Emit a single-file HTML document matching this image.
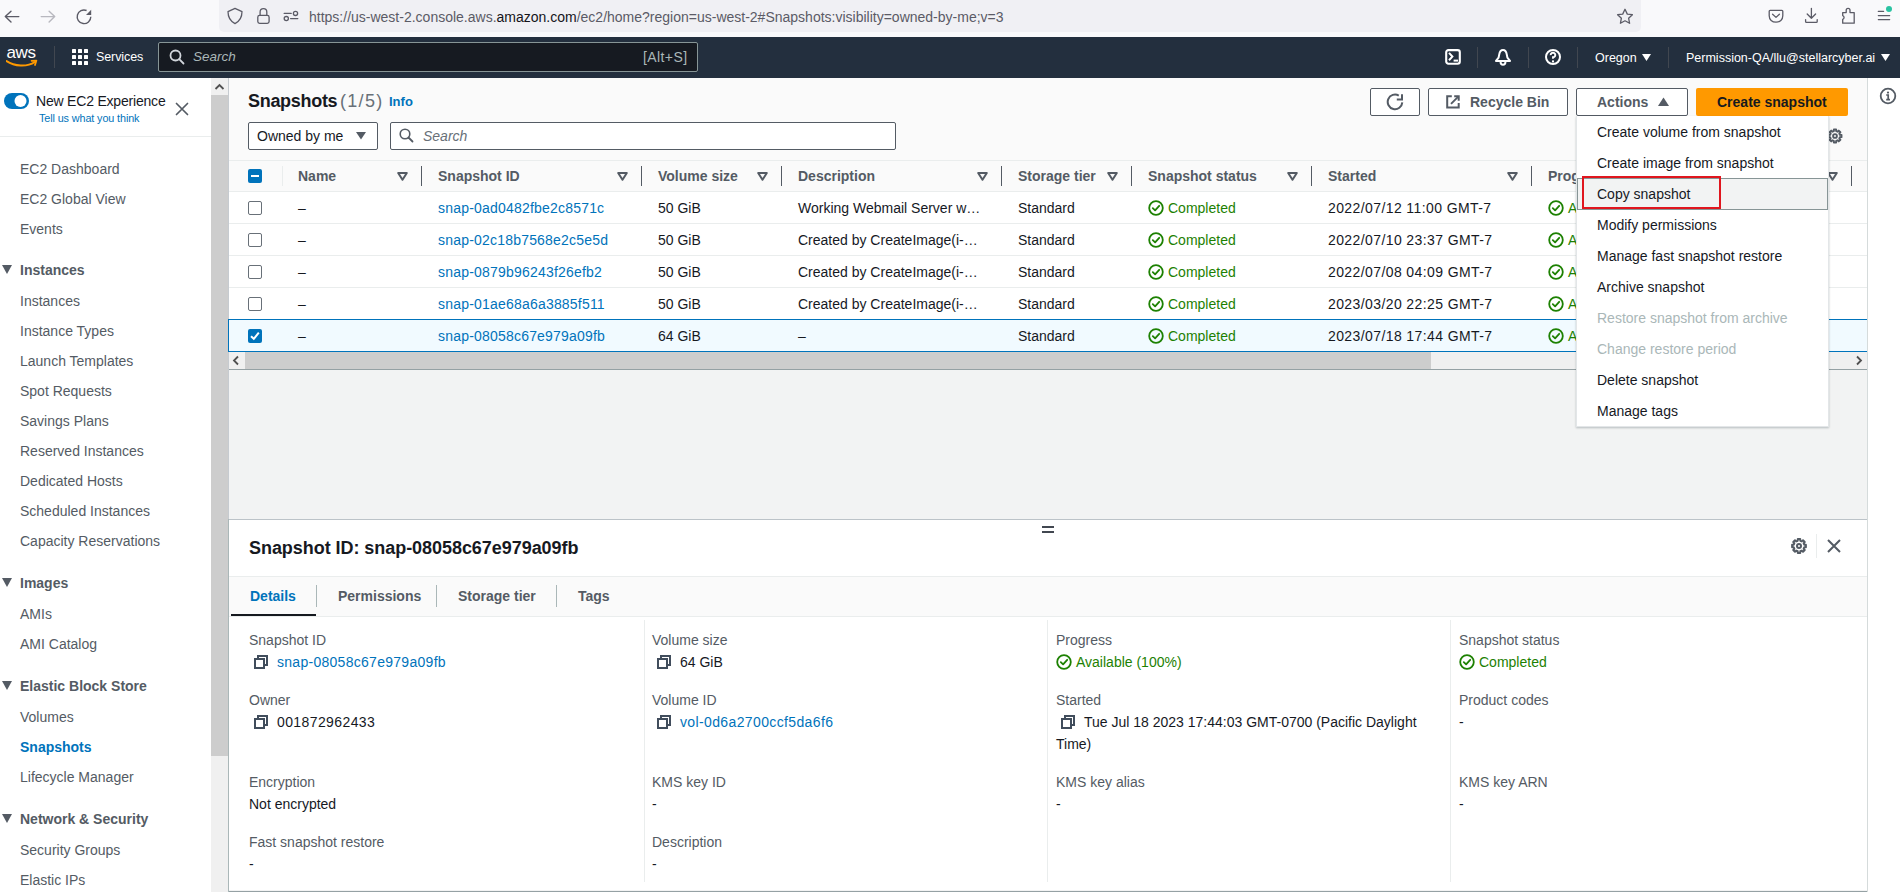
<!DOCTYPE html>
<html><head><meta charset="utf-8">
<style>
*{box-sizing:border-box;margin:0;padding:0}
html,body{width:1900px;height:892px;overflow:hidden;background:#fff;font-family:"Liberation Sans",sans-serif;font-size:14px;color:#16191f}
.a{position:absolute;white-space:nowrap}
#chrome{position:absolute;left:0;top:0;width:1900px;height:37px;background:#f9f9fb}
#url{position:absolute;left:219px;top:-4px;width:1422px;height:36px;background:#f0f0f4;border-radius:5px}
#nav{position:absolute;left:0;top:37px;width:1900px;height:41px;background:#232f3e}
#side{position:absolute;left:0;top:78px;width:211px;height:814px;background:#fff}
#sb{position:absolute;left:211px;top:78px;width:17px;height:814px;background:#f0f0f0}
#main{position:absolute;left:228px;top:78px;width:1640px;height:814px;background:#f2f3f3;border-left:1px solid #c6cbd0;border-right:1px solid #d5dbdb}
#tools{position:absolute;left:1868px;top:78px;width:32px;height:814px;background:#fff}
.nl{font-size:14px;color:#545b64;left:20px;line-height:20px}
.sh{font-size:14px;font-weight:bold;color:#545b64;left:20px;line-height:20px}
.tri{position:absolute;left:2px;width:0;height:0;border-left:5px solid transparent;border-right:5px solid transparent;border-top:9px solid #545b64}
.th{font-weight:bold;color:#545b64;line-height:20px;top:166px}
.sep{position:absolute;top:166px;width:1px;height:20px;background:#545b64}
.sort{position:absolute;top:172px}
.td{line-height:20px}
.lnk{color:#0073bb}
.ok{color:#1d8102}
.rl{position:absolute;left:229px;width:1638px;height:1px;background:#eaeded}
.cb{position:absolute;left:248px;width:14px;height:14px;border:1px solid #687078;border-radius:2px;background:#fff}
.mi{left:1597px;line-height:20px;color:#16191f}
.dis{color:#aab7b8}
.lbl{color:#545b64;line-height:20px}
.val{line-height:20px}
</style></head><body>
<div id="chrome"><div id="url"></div>
<svg class="a" style="left:0;top:0" width="110" height="34" viewBox="0 0 110 34">
<path d="M11 11.3L5.3 16.6L11 22M5.5 16.6H18.8" fill="none" stroke="#5b5b66" stroke-width="1.4" stroke-linecap="round" stroke-linejoin="round"/>
<path d="M49.1 11.3L54.7 16.6L49.1 22M54.5 16.6H41.2" fill="none" stroke="#b8b8bf" stroke-width="1.4" stroke-linecap="round" stroke-linejoin="round"/>
<path d="M90.8 16.8A6.8 6.8 0 1 1 86.6 10.5" fill="none" stroke="#5b5b66" stroke-width="1.4"/>
<path d="M91.2 9.8V15H86Z" fill="#5b5b66"/>
</svg>
<svg class="a" style="left:215px;top:0" width="110" height="34" viewBox="0 0 110 34">
<path d="M20 8.4L27 11.6C27 17.5 25.5 21 20 23.6C14.5 21 13 17.5 13 11.6Z" fill="none" stroke="#5b5b66" stroke-width="1.3" stroke-linejoin="round"/>
<rect x="42.8" y="15.4" width="11.3" height="8" rx="1.8" fill="none" stroke="#5b5b66" stroke-width="1.3"/>
<path d="M45.1 15.4V12A3.35 3.35 0 0 1 51.8 12V15.4" fill="none" stroke="#5b5b66" stroke-width="1.3"/>
<path d="M69.2 13.4H76.2M75.6 18.6H82.8" stroke="#5b5b66" stroke-width="1.3" stroke-linecap="round"/>
<circle cx="80.5" cy="13.4" r="2.1" fill="none" stroke="#5b5b66" stroke-width="1.3"/>
<circle cx="71.3" cy="18.6" r="2.1" fill="none" stroke="#5b5b66" stroke-width="1.3"/>
</svg>
<div class="a" style="left:309px;top:7px;line-height:20px;font-size:14px;color:#5b5b66">https://us-west-2.console.aws.<span style="color:#15141a">amazon.com</span>/ec2/home?region=us-west-2#Snapshots:visibility=owned-by-me;v=3</div>
<svg class="a" style="left:1616px;top:8px" width="18" height="17" viewBox="0 0 18 17"><path d="M9 1.3L11.3 6.1L16.4 6.7L12.6 10.2L13.6 15.3L9 12.8L4.4 15.3L5.4 10.2L1.6 6.7L6.7 6.1Z" fill="none" stroke="#5b5b66" stroke-width="1.3" stroke-linejoin="round"/></svg>
<svg class="a" style="left:1750px;top:0" width="150" height="34" viewBox="0 0 150 34">
<path d="M20.1 10.3H31.9C32.5 10.3 32.8 10.6 32.8 11.2V15.8C32.8 19.6 29.9 22.2 26 22.2C22.1 22.2 19.2 19.6 19.2 15.8V11.2C19.2 10.6 19.5 10.3 20.1 10.3Z" fill="none" stroke="#5b5b66" stroke-width="1.3" stroke-linejoin="round"/>
<path d="M22.6 14.2L26 17.4L29.4 14.2" fill="none" stroke="#5b5b66" stroke-width="1.3" stroke-linecap="round" stroke-linejoin="round"/>
<path d="M61.4 8.3V18.3M57.2 14L61.4 18.3L65.6 14M55.6 19.6V21.4C55.6 22 55.9 22.3 56.5 22.3H66.3C66.9 22.3 67.2 22 67.2 21.4V19.6" fill="none" stroke="#5b5b66" stroke-width="1.3" stroke-linecap="round" stroke-linejoin="round"/>
<path d="M92.7 12.6H96.2V10.3A1.9 1.9 0 0 1 100 10.3V12.6H104.2V23.2H92.7V19.4A2 2 0 0 0 92.7 15.6Z" fill="none" stroke="#5b5b66" stroke-width="1.3" stroke-linejoin="round"/>
<path d="M128.3 11.4H133.6M128.3 15.6H139.7M128.3 19.6H139.7" stroke="#5b5b66" stroke-width="1.2" stroke-linecap="round"/>
<circle cx="139" cy="8.9" r="3" fill="#2ac3a2"/>
</svg>
</div>
<div id="nav">
<svg class="a" style="left:6px;top:9px" width="33" height="22" viewBox="0 0 33 22"><text x="0.5" y="11.6" font-family="Liberation Sans" font-size="17" fill="#fff" letter-spacing="-0.4">aws</text><path d="M0.6 15.1C8.5 20.4 21 21.3 28.8 16" fill="none" stroke="#ff9900" stroke-width="1.9" stroke-linecap="round"/><path d="M25.6 14.8L30.4 14.6L29 19" fill="none" stroke="#ff9900" stroke-width="1.8" stroke-linecap="round" stroke-linejoin="round"/></svg>
<div class="a" style="left:54px;top:9px;width:1px;height:22px;background:#414750"></div>
<svg class="a" style="left:72px;top:12px" width="17" height="17" viewBox="0 0 17 17" fill="#fff"><rect x="0" y="0" width="4" height="4" rx=".6"/><rect x="6" y="0" width="4" height="4" rx=".6"/><rect x="12" y="0" width="4" height="4" rx=".6"/><rect x="0" y="6" width="4" height="4" rx=".6"/><rect x="6" y="6" width="4" height="4" rx=".6"/><rect x="12" y="6" width="4" height="4" rx=".6"/><rect x="0" y="12" width="4" height="4" rx=".6"/><rect x="6" y="12" width="4" height="4" rx=".6"/><rect x="12" y="12" width="4" height="4" rx=".6"/></svg>
<div class="a" style="left:96px;top:10px;line-height:20px;font-size:12.5px;letter-spacing:-0.1px;color:#fff">Services</div>
<div class="a" style="left:158px;top:5px;width:540px;height:30px;background:#161a21;border:1px solid #879596;border-radius:2px"></div>
<svg class="a" style="left:169px;top:12px" width="16" height="16" viewBox="0 0 16 16"><circle cx="6.5" cy="6.5" r="5" fill="none" stroke="#d1d5db" stroke-width="1.8"/><path d="M10.2 10.2L14.5 14.5" stroke="#d1d5db" stroke-width="1.8" stroke-linecap="round"/></svg>
<div class="a" style="left:193px;top:10px;line-height:20px;font-size:13.5px;font-style:italic;color:#aab7b8">Search</div>
<div class="a" style="left:643px;top:10px;line-height:20px;font-size:14px;color:#aab7b8;letter-spacing:0.4px">[Alt+S]</div>
<svg class="a" style="left:1444px;top:11px" width="18" height="18" viewBox="0 0 18 18"><rect x="2.2" y="2.1" width="13.6" height="13.6" rx="2.2" fill="none" stroke="#fff" stroke-width="2.1"/><path d="M5 4.8L8.4 8.6L5 12.3" fill="none" stroke="#fff" stroke-width="2"/><path d="M9.6 12.6H14" stroke="#fff" stroke-width="2"/></svg>
<div class="a" style="left:1477px;top:10px;width:1px;height:21px;background:#414750"></div>
<svg class="a" style="left:1494px;top:11px" width="18" height="18" viewBox="0 0 18 18"><path d="M9 2C6.6 2 5.6 4.2 5.2 6.6L4.6 9.6L2 12.9H16L13.4 9.6L12.8 6.6C12.4 4.2 11.4 2 9 2Z" fill="none" stroke="#fff" stroke-width="2" stroke-linejoin="round"/><path d="M6.6 13.4V14.3A2.4 2.4 0 0 0 11.4 14.3V13.4" fill="none" stroke="#fff" stroke-width="2"/></svg>
<div class="a" style="left:1528px;top:10px;width:1px;height:21px;background:#414750"></div>
<svg class="a" style="left:1544px;top:11px" width="18" height="18" viewBox="0 0 18 18"><circle cx="9" cy="9" r="7" fill="none" stroke="#fff" stroke-width="2"/><path d="M6.7 7.1A2.3 2.3 0 1 1 9 9.3V10.8" fill="none" stroke="#fff" stroke-width="1.9"/><rect x="8" y="12.4" width="2" height="2" fill="#fff"/></svg>
<div class="a" style="left:1577px;top:10px;width:1px;height:21px;background:#414750"></div>
<div class="a" style="left:1595px;top:11px;line-height:20px;font-size:12.5px;color:#fff">Oregon</div>
<svg class="a" style="left:1642px;top:17px" width="9" height="8" viewBox="0 0 9 8"><path d="M0 0H9L4.5 7Z" fill="#fff"/></svg>
<div class="a" style="left:1668px;top:10px;width:1px;height:21px;background:#414750"></div>
<div class="a" style="left:1686px;top:11px;line-height:20px;font-size:12.5px;color:#fff">Permission-QA/llu@stellarcyber.ai</div>
<svg class="a" style="left:1881px;top:17px" width="9" height="8" viewBox="0 0 9 8"><path d="M0 0H9L4.5 7Z" fill="#fff"/></svg>
</div>
<div id="side"><svg class="a" style="left:4px;top:15px" width="25" height="16" viewBox="0 0 25 16"><rect x="0" y="0" width="25" height="16" rx="8" fill="#0073bb"/><circle cx="16.5" cy="8" r="6" fill="#fff"/></svg>
<div class="a" style="left:36px;top:13px;line-height:20px;font-size:14px;color:#16191f;letter-spacing:-0.2px">New EC2 Experience</div>
<div class="a" style="left:39px;top:33px;line-height:14px;font-size:10.8px;color:#0073bb;letter-spacing:-0.1px">Tell us what you think</div>
<svg class="a" style="left:175px;top:24px" width="14" height="14" viewBox="0 0 14 14"><path d="M1.5 1.5L12.5 12.5M12.5 1.5L1.5 12.5" stroke="#545b64" stroke-width="1.7" stroke-linecap="round"/></svg>
<div class="a" style="left:0;top:58px;width:211px;height:1px;background:#eaeded"></div>
<div class="a nl" style="top:81px;">EC2 Dashboard</div>
<div class="a nl" style="top:111px;">EC2 Global View</div>
<div class="a nl" style="top:141px;">Events</div>
<div class="a sh" style="top:182px;">Instances</div>
<div class="tri" style="top:187px"></div>
<div class="a nl" style="top:213px;">Instances</div>
<div class="a nl" style="top:243px;">Instance Types</div>
<div class="a nl" style="top:273px;">Launch Templates</div>
<div class="a nl" style="top:303px;">Spot Requests</div>
<div class="a nl" style="top:333px;">Savings Plans</div>
<div class="a nl" style="top:363px;">Reserved Instances</div>
<div class="a nl" style="top:393px;">Dedicated Hosts</div>
<div class="a nl" style="top:423px;">Scheduled Instances</div>
<div class="a nl" style="top:453px;">Capacity Reservations</div>
<div class="a sh" style="top:495px;">Images</div>
<div class="tri" style="top:500px"></div>
<div class="a nl" style="top:526px;">AMIs</div>
<div class="a nl" style="top:556px;">AMI Catalog</div>
<div class="a sh" style="top:598px;">Elastic Block Store</div>
<div class="tri" style="top:603px"></div>
<div class="a nl" style="top:629px;">Volumes</div>
<div class="a nl" style="top:659px;color:#0073bb;font-weight:bold">Snapshots</div>
<div class="a nl" style="top:689px;">Lifecycle Manager</div>
<div class="a sh" style="top:731px;">Network &amp; Security</div>
<div class="tri" style="top:736px"></div>
<div class="a nl" style="top:762px;">Security Groups</div>
<div class="a nl" style="top:792px;">Elastic IPs</div></div>
<div id="sb"><div class="a" style="left:0;top:17px;width:17px;height:661px;background:#cdcdcd"></div><svg class="a" style="left:3px;top:5px" width="11" height="7" viewBox="0 0 11 7"><path d="M1.5 6L5.5 2L9.5 6" fill="none" stroke="#505050" stroke-width="1.8"/></svg></div>
<div id="main"></div>
<div class="a" style="left:229px;top:78px;width:1638px;height:82px;background:#fafafa"></div>
<div class="a" style="left:248px;top:90px;line-height:22px;font-size:18px;font-weight:bold;color:#16191f;letter-spacing:-0.3px">Snapshots</div><div class="a" style="left:340px;top:90px;line-height:22px;font-size:18px;color:#687078;letter-spacing:1.3px">(1/5)</div>
<div class="a" style="left:389px;top:93px;line-height:18px;font-size:13px;font-weight:bold;color:#0073bb">Info</div>
<div class="a" style="left:248px;top:122px;width:130px;height:28px;background:#fff;border:1px solid #545b64;border-radius:2px"></div>
<div class="a" style="left:257px;top:126px;line-height:20px;font-size:14px;color:#16191f">Owned by me</div>
<svg class="a" style="left:356px;top:132px" width="10" height="8" viewBox="0 0 10 8"><path d="M0 0H10L5 7.5Z" fill="#545b64"/></svg>
<div class="a" style="left:390px;top:122px;width:506px;height:28px;background:#fff;border:1px solid #545b64;border-radius:2px"></div>
<svg class="a" style="left:399px;top:128px" width="15" height="15" viewBox="0 0 15 15"><circle cx="6" cy="6" r="4.8" fill="none" stroke="#545b64" stroke-width="1.6"/><path d="M9.5 9.5L13.5 13.5" stroke="#545b64" stroke-width="1.8" stroke-linecap="round"/></svg>
<div class="a" style="left:423px;top:126px;line-height:20px;font-size:14px;font-style:italic;color:#687078">Search</div>
<div class="a" style="left:1370px;top:88px;width:50px;height:28px;background:#fff;border:1px solid #545b64;border-radius:2px"></div>
<svg class="a" style="left:1386px;top:93px" width="18" height="18" viewBox="0 0 18 18"><path d="M16.3 9.4A7.3 7.3 0 1 1 12.8 2.6" fill="none" stroke="#545b64" stroke-width="2"/><path d="M16 1.2V6.5H10.8" fill="none" stroke="#545b64" stroke-width="2"/></svg>
<div class="a" style="left:1428px;top:88px;width:140px;height:28px;background:#fff;border:1px solid #545b64;border-radius:2px"></div>
<svg class="a" style="left:1445px;top:94px" width="16" height="16" viewBox="0 0 16 16"><path d="M6.8 2.2H2.2V13.6H13.7V9.1" fill="none" stroke="#545b64" stroke-width="2"/><path d="M9.2 2.2H13.7V6.7" fill="none" stroke="#545b64" stroke-width="2"/><path d="M13.5 2.4L6 9.9" fill="none" stroke="#545b64" stroke-width="2"/></svg>
<div class="a" style="left:1470px;top:92px;line-height:20px;font-size:14px;font-weight:bold;color:#545b64">Recycle Bin</div>
<div class="a" style="left:1576px;top:88px;width:112px;height:28px;background:#fff;border:1px solid #545b64;border-radius:2px"></div>
<div class="a" style="left:1597px;top:92px;line-height:20px;font-size:14px;font-weight:bold;color:#545b64">Actions</div>
<svg class="a" style="left:1658px;top:97px" width="11" height="9" viewBox="0 0 11 9"><path d="M0 9H11L5.5 0.5Z" fill="#545b64"/></svg>
<div class="a" style="left:1696px;top:88px;width:152px;height:28px;background:#ff9900;border-radius:2px"></div>
<div class="a" style="left:1717px;top:92px;line-height:20px;font-size:14px;font-weight:bold;color:#16191f">Create snapshot</div>
<svg class="a" style="left:1827px;top:128px" width="16" height="16" viewBox="0 0 16 16"><path d="M6.84 1.50 L9.16 1.50 L9.20 3.15 L10.59 3.72 L11.77 2.59 L13.41 4.23 L12.28 5.41 L12.85 6.80 L14.50 6.84 L14.50 9.16 L12.85 9.20 L12.28 10.59 L13.41 11.77 L11.77 13.41 L10.59 12.28 L9.20 12.85 L9.16 14.50 L6.84 14.50 L6.80 12.85 L5.41 12.28 L4.23 13.41 L2.59 11.77 L3.72 10.59 L3.15 9.20 L1.50 9.16 L1.50 6.84 L3.15 6.80 L3.72 5.41 L2.59 4.23 L4.23 2.59 L5.41 3.72 L6.80 3.15Z" fill="none" stroke="#545b64" stroke-width="1.9" stroke-linejoin="round"/><circle cx="8" cy="8" r="1.9" fill="none" stroke="#545b64" stroke-width="1.9"/></svg>
<div class="a" style="left:229px;top:160px;width:1638px;height:1px;background:#eaeded"></div>
<div class="a" style="left:229px;top:161px;width:1638px;height:31px;background:#fafafa"></div>
<div class="a" style="left:229px;top:191px;width:1638px;height:1px;background:#eaeded"></div>
<div class="a" style="left:248px;top:169px;width:14px;height:14px;background:#0073bb;border-radius:2px"><div style="position:absolute;left:3px;top:6px;width:8px;height:2px;background:#fff"></div></div>
<div class="a th" style="left:298px">Name</div>
<svg class="a sort" style="left:397px" width="11" height="9" viewBox="0 0 11 9"><path d="M1.2 1H9.8L5.5 7.8Z" fill="none" stroke="#545b64" stroke-width="2" stroke-linejoin="round"/></svg>
<div class="sep" style="left:421px"></div>
<div class="a th" style="left:438px">Snapshot ID</div>
<svg class="a sort" style="left:617px" width="11" height="9" viewBox="0 0 11 9"><path d="M1.2 1H9.8L5.5 7.8Z" fill="none" stroke="#545b64" stroke-width="2" stroke-linejoin="round"/></svg>
<div class="sep" style="left:641px"></div>
<div class="a th" style="left:658px">Volume size</div>
<svg class="a sort" style="left:757px" width="11" height="9" viewBox="0 0 11 9"><path d="M1.2 1H9.8L5.5 7.8Z" fill="none" stroke="#545b64" stroke-width="2" stroke-linejoin="round"/></svg>
<div class="sep" style="left:781px"></div>
<div class="a th" style="left:798px">Description</div>
<svg class="a sort" style="left:977px" width="11" height="9" viewBox="0 0 11 9"><path d="M1.2 1H9.8L5.5 7.8Z" fill="none" stroke="#545b64" stroke-width="2" stroke-linejoin="round"/></svg>
<div class="sep" style="left:1001px"></div>
<div class="a th" style="left:1018px">Storage tier</div>
<svg class="a sort" style="left:1107px" width="11" height="9" viewBox="0 0 11 9"><path d="M1.2 1H9.8L5.5 7.8Z" fill="none" stroke="#545b64" stroke-width="2" stroke-linejoin="round"/></svg>
<div class="sep" style="left:1131px"></div>
<div class="a th" style="left:1148px">Snapshot status</div>
<svg class="a sort" style="left:1287px" width="11" height="9" viewBox="0 0 11 9"><path d="M1.2 1H9.8L5.5 7.8Z" fill="none" stroke="#545b64" stroke-width="2" stroke-linejoin="round"/></svg>
<div class="sep" style="left:1311px"></div>
<div class="a th" style="left:1328px">Started</div>
<svg class="a sort" style="left:1507px" width="11" height="9" viewBox="0 0 11 9"><path d="M1.2 1H9.8L5.5 7.8Z" fill="none" stroke="#545b64" stroke-width="2" stroke-linejoin="round"/></svg>
<div class="sep" style="left:1531px"></div>
<div class="a th" style="left:1548px">Progress</div>
<svg class="a sort" style="left:1827px" width="11" height="9" viewBox="0 0 11 9"><path d="M1.2 1H9.8L5.5 7.8Z" fill="none" stroke="#545b64" stroke-width="2" stroke-linejoin="round"/></svg>
<div class="sep" style="left:1851px"></div>
<div class="sep" style="left:282px;background:#eaeded"></div>
<div class="a" style="left:229px;top:192px;width:1638px;height:31px;background:#fff"></div>
<div class="rl" style="top:223px"></div>
<div class="cb" style="top:201px"></div>
<div class="a td" style="left:298px;top:198px">–</div>
<div class="a td lnk" style="left:438px;top:198px;letter-spacing:0.2px">snap-0ad0482fbe2c8571c</div>
<div class="a td" style="left:658px;top:198px">50 GiB</div>
<div class="a td" style="left:798px;top:198px">Working Webmail Server w…</div>
<div class="a td" style="left:1018px;top:198px">Standard</div>
<svg class="a" style="left:1148px;top:200px" width="16" height="16" viewBox="0 0 16 16"><circle cx="8" cy="8" r="6.8" fill="none" stroke="#1d8102" stroke-width="1.8"/><path d="M4.8 8.2L7.1 10.4L11.2 5.8" fill="none" stroke="#1d8102" stroke-width="1.8" stroke-linecap="round" stroke-linejoin="round"/></svg>
<div class="a td ok" style="left:1168px;top:198px">Completed</div>
<div class="a td" style="left:1328px;top:198px;letter-spacing:0.4px">2022/07/12 11:00 GMT-7</div>
<svg class="a" style="left:1548px;top:200px" width="16" height="16" viewBox="0 0 16 16"><circle cx="8" cy="8" r="6.8" fill="none" stroke="#1d8102" stroke-width="1.8"/><path d="M4.8 8.2L7.1 10.4L11.2 5.8" fill="none" stroke="#1d8102" stroke-width="1.8" stroke-linecap="round" stroke-linejoin="round"/></svg>
<div class="a td ok" style="left:1568px;top:198px">Available (100%)</div>
<div class="a" style="left:229px;top:224px;width:1638px;height:31px;background:#fff"></div>
<div class="rl" style="top:255px"></div>
<div class="cb" style="top:233px"></div>
<div class="a td" style="left:298px;top:230px">–</div>
<div class="a td lnk" style="left:438px;top:230px;letter-spacing:0.2px">snap-02c18b7568e2c5e5d</div>
<div class="a td" style="left:658px;top:230px">50 GiB</div>
<div class="a td" style="left:798px;top:230px">Created by CreateImage(i-…</div>
<div class="a td" style="left:1018px;top:230px">Standard</div>
<svg class="a" style="left:1148px;top:232px" width="16" height="16" viewBox="0 0 16 16"><circle cx="8" cy="8" r="6.8" fill="none" stroke="#1d8102" stroke-width="1.8"/><path d="M4.8 8.2L7.1 10.4L11.2 5.8" fill="none" stroke="#1d8102" stroke-width="1.8" stroke-linecap="round" stroke-linejoin="round"/></svg>
<div class="a td ok" style="left:1168px;top:230px">Completed</div>
<div class="a td" style="left:1328px;top:230px;letter-spacing:0.4px">2022/07/10 23:37 GMT-7</div>
<svg class="a" style="left:1548px;top:232px" width="16" height="16" viewBox="0 0 16 16"><circle cx="8" cy="8" r="6.8" fill="none" stroke="#1d8102" stroke-width="1.8"/><path d="M4.8 8.2L7.1 10.4L11.2 5.8" fill="none" stroke="#1d8102" stroke-width="1.8" stroke-linecap="round" stroke-linejoin="round"/></svg>
<div class="a td ok" style="left:1568px;top:230px">Available (100%)</div>
<div class="a" style="left:229px;top:256px;width:1638px;height:31px;background:#fff"></div>
<div class="rl" style="top:287px"></div>
<div class="cb" style="top:265px"></div>
<div class="a td" style="left:298px;top:262px">–</div>
<div class="a td lnk" style="left:438px;top:262px;letter-spacing:0.2px">snap-0879b96243f26efb2</div>
<div class="a td" style="left:658px;top:262px">50 GiB</div>
<div class="a td" style="left:798px;top:262px">Created by CreateImage(i-…</div>
<div class="a td" style="left:1018px;top:262px">Standard</div>
<svg class="a" style="left:1148px;top:264px" width="16" height="16" viewBox="0 0 16 16"><circle cx="8" cy="8" r="6.8" fill="none" stroke="#1d8102" stroke-width="1.8"/><path d="M4.8 8.2L7.1 10.4L11.2 5.8" fill="none" stroke="#1d8102" stroke-width="1.8" stroke-linecap="round" stroke-linejoin="round"/></svg>
<div class="a td ok" style="left:1168px;top:262px">Completed</div>
<div class="a td" style="left:1328px;top:262px;letter-spacing:0.4px">2022/07/08 04:09 GMT-7</div>
<svg class="a" style="left:1548px;top:264px" width="16" height="16" viewBox="0 0 16 16"><circle cx="8" cy="8" r="6.8" fill="none" stroke="#1d8102" stroke-width="1.8"/><path d="M4.8 8.2L7.1 10.4L11.2 5.8" fill="none" stroke="#1d8102" stroke-width="1.8" stroke-linecap="round" stroke-linejoin="round"/></svg>
<div class="a td ok" style="left:1568px;top:262px">Available (100%)</div>
<div class="a" style="left:229px;top:288px;width:1638px;height:31px;background:#fff"></div>
<div class="rl" style="top:319px"></div>
<div class="cb" style="top:297px"></div>
<div class="a td" style="left:298px;top:294px">–</div>
<div class="a td lnk" style="left:438px;top:294px;letter-spacing:0.2px">snap-01ae68a6a3885f511</div>
<div class="a td" style="left:658px;top:294px">50 GiB</div>
<div class="a td" style="left:798px;top:294px">Created by CreateImage(i-…</div>
<div class="a td" style="left:1018px;top:294px">Standard</div>
<svg class="a" style="left:1148px;top:296px" width="16" height="16" viewBox="0 0 16 16"><circle cx="8" cy="8" r="6.8" fill="none" stroke="#1d8102" stroke-width="1.8"/><path d="M4.8 8.2L7.1 10.4L11.2 5.8" fill="none" stroke="#1d8102" stroke-width="1.8" stroke-linecap="round" stroke-linejoin="round"/></svg>
<div class="a td ok" style="left:1168px;top:294px">Completed</div>
<div class="a td" style="left:1328px;top:294px;letter-spacing:0.4px">2023/03/20 22:25 GMT-7</div>
<svg class="a" style="left:1548px;top:296px" width="16" height="16" viewBox="0 0 16 16"><circle cx="8" cy="8" r="6.8" fill="none" stroke="#1d8102" stroke-width="1.8"/><path d="M4.8 8.2L7.1 10.4L11.2 5.8" fill="none" stroke="#1d8102" stroke-width="1.8" stroke-linecap="round" stroke-linejoin="round"/></svg>
<div class="a td ok" style="left:1568px;top:294px">Available (100%)</div>
<div class="a" style="left:228px;top:319px;width:1639px;height:33px;background:#f1faff;border:1px solid #0073bb;border-right:none"></div>
<div class="a" style="left:248px;top:329px;width:14px;height:14px;background:#0073bb;border-radius:2px"><svg style="position:absolute;left:0;top:0" width="14" height="14" viewBox="0 0 14 14"><path d="M3 7.2L5.8 9.8L10.8 3.6" fill="none" stroke="#fff" stroke-width="2"/></svg></div>
<div class="a td" style="left:298px;top:326px">–</div>
<div class="a td lnk" style="left:438px;top:326px;letter-spacing:0.2px">snap-08058c67e979a09fb</div>
<div class="a td" style="left:658px;top:326px">64 GiB</div>
<div class="a td" style="left:798px;top:326px">–</div>
<div class="a td" style="left:1018px;top:326px">Standard</div>
<svg class="a" style="left:1148px;top:328px" width="16" height="16" viewBox="0 0 16 16"><circle cx="8" cy="8" r="6.8" fill="none" stroke="#1d8102" stroke-width="1.8"/><path d="M4.8 8.2L7.1 10.4L11.2 5.8" fill="none" stroke="#1d8102" stroke-width="1.8" stroke-linecap="round" stroke-linejoin="round"/></svg>
<div class="a td ok" style="left:1168px;top:326px">Completed</div>
<div class="a td" style="left:1328px;top:326px;letter-spacing:0.4px">2023/07/18 17:44 GMT-7</div>
<svg class="a" style="left:1548px;top:328px" width="16" height="16" viewBox="0 0 16 16"><circle cx="8" cy="8" r="6.8" fill="none" stroke="#1d8102" stroke-width="1.8"/><path d="M4.8 8.2L7.1 10.4L11.2 5.8" fill="none" stroke="#1d8102" stroke-width="1.8" stroke-linecap="round" stroke-linejoin="round"/></svg>
<div class="a td ok" style="left:1568px;top:326px">Available (100%)</div>
<div class="a" style="left:229px;top:352px;width:1638px;height:17px;background:#f0f0f0"></div>
<div class="a" style="left:245px;top:352px;width:1186px;height:17px;background:#cdcdcd"></div>
<svg class="a" style="left:232px;top:355px" width="8" height="11" viewBox="0 0 8 11"><path d="M6 1.5L2 5.5L6 9.5" fill="none" stroke="#505050" stroke-width="1.8"/></svg>
<svg class="a" style="left:1855px;top:355px" width="8" height="11" viewBox="0 0 8 11"><path d="M2 1.5L6 5.5L2 9.5" fill="none" stroke="#505050" stroke-width="1.8"/></svg>
<div class="a" style="left:229px;top:369px;width:1638px;height:1px;background:#95a1a4"></div>
<div id="tools"></div>
<div class="a" style="left:229px;top:519px;width:1638px;height:1px;background:#bcc3c8"></div><div class="a" style="left:228px;top:519px;width:1px;height:373px;background:#aab7b8"></div>
<div class="a" style="left:229px;top:520px;width:1638px;height:370px;background:#fff"></div>
<div class="a" style="left:229px;top:891px;width:1638px;height:1px;background:#95a1a4"></div>
<div class="a" style="left:1042px;top:526px;width:12px;height:2px;background:#414750"></div>
<div class="a" style="left:1042px;top:531px;width:12px;height:2px;background:#414750"></div>
<div class="a" style="left:249px;top:537px;line-height:22px;font-size:18px;font-weight:bold;color:#16191f;letter-spacing:-0.05px">Snapshot ID: snap-08058c67e979a09fb</div>
<svg class="a" style="left:1790px;top:537px" width="18" height="18" viewBox="0 0 18 18"><path d="M7.77 2.11 L10.23 2.11 L10.29 3.76 L11.79 4.38 L13.00 3.26 L14.74 5.00 L13.62 6.21 L14.24 7.71 L15.89 7.77 L15.89 10.23 L14.24 10.29 L13.62 11.79 L14.74 13.00 L13.00 14.74 L11.79 13.62 L10.29 14.24 L10.23 15.89 L7.77 15.89 L7.71 14.24 L6.21 13.62 L5.00 14.74 L3.26 13.00 L4.38 11.79 L3.76 10.29 L2.11 10.23 L2.11 7.77 L3.76 7.71 L4.38 6.21 L3.26 5.00 L5.00 3.26 L6.21 4.38 L7.71 3.76Z" fill="none" stroke="#545b64" stroke-width="2" stroke-linejoin="round"/><circle cx="9" cy="9" r="2" fill="none" stroke="#545b64" stroke-width="2"/></svg>
<div class="a" style="left:1816px;top:534px;width:1px;height:24px;background:#eaeded"></div>
<svg class="a" style="left:1826px;top:538px" width="16" height="16" viewBox="0 0 16 16"><path d="M2 2L14 14M14 2L2 14" stroke="#545b64" stroke-width="2"/></svg>
<div class="a" style="left:229px;top:576px;width:1638px;height:1px;background:#eaeded"></div>
<div class="a" style="left:229px;top:577px;width:1638px;height:39px;background:#fafafa"></div>
<div class="a" style="left:229px;top:616px;width:1638px;height:1px;background:#eaeded"></div>
<div class="a" style="left:231px;top:614px;width:85px;height:2px;background:#16191f"></div>
<div class="a" style="left:250px;top:586px;line-height:20px;font-size:14px;font-weight:bold;color:#0073bb">Details</div>
<div class="a" style="left:338px;top:586px;line-height:20px;font-size:14px;font-weight:bold;color:#545b64">Permissions</div>
<div class="a" style="left:458px;top:586px;line-height:20px;font-size:14px;font-weight:bold;color:#545b64">Storage tier</div>
<div class="a" style="left:578px;top:586px;line-height:20px;font-size:14px;font-weight:bold;color:#545b64">Tags</div>
<div class="a" style="left:316px;top:585px;width:1px;height:22px;background:#aab7b8"></div>
<div class="a" style="left:436px;top:585px;width:1px;height:22px;background:#aab7b8"></div>
<div class="a" style="left:556px;top:585px;width:1px;height:22px;background:#aab7b8"></div>
<div class="a" style="left:644px;top:620px;width:1px;height:262px;background:#eaeded"></div>
<div class="a" style="left:1047px;top:620px;width:1px;height:262px;background:#eaeded"></div>
<div class="a" style="left:1450px;top:620px;width:1px;height:262px;background:#eaeded"></div>
<div class="a lbl" style="left:249px;top:630px">Snapshot ID</div>
<svg class="a" style="left:254px;top:655px" width="14" height="14" viewBox="0 0 14 14"><path d="M4 3V1H13V10H11" fill="none" stroke="#414d5c" stroke-width="2"/><rect x="1" y="4" width="9" height="9" fill="none" stroke="#414d5c" stroke-width="2"/></svg>
<div class="a val" style="left:277px;top:652px;color:#0073bb;letter-spacing:0.28px">snap-08058c67e979a09fb</div>
<div class="a lbl" style="left:249px;top:690px">Owner</div>
<svg class="a" style="left:254px;top:715px" width="14" height="14" viewBox="0 0 14 14"><path d="M4 3V1H13V10H11" fill="none" stroke="#414d5c" stroke-width="2"/><rect x="1" y="4" width="9" height="9" fill="none" stroke="#414d5c" stroke-width="2"/></svg>
<div class="a val" style="left:277px;top:712px;letter-spacing:0.4px">001872962433</div>
<div class="a lbl" style="left:249px;top:772px">Encryption</div>
<div class="a val" style="left:249px;top:794px;">Not encrypted</div>
<div class="a lbl" style="left:249px;top:832px">Fast snapshot restore</div>
<div class="a val" style="left:249px;top:854px;">-</div>
<div class="a lbl" style="left:652px;top:630px">Volume size</div>
<svg class="a" style="left:657px;top:655px" width="14" height="14" viewBox="0 0 14 14"><path d="M4 3V1H13V10H11" fill="none" stroke="#414d5c" stroke-width="2"/><rect x="1" y="4" width="9" height="9" fill="none" stroke="#414d5c" stroke-width="2"/></svg>
<div class="a val" style="left:680px;top:652px;">64 GiB</div>
<div class="a lbl" style="left:652px;top:690px">Volume ID</div>
<svg class="a" style="left:657px;top:715px" width="14" height="14" viewBox="0 0 14 14"><path d="M4 3V1H13V10H11" fill="none" stroke="#414d5c" stroke-width="2"/><rect x="1" y="4" width="9" height="9" fill="none" stroke="#414d5c" stroke-width="2"/></svg>
<div class="a val" style="left:680px;top:712px;color:#0073bb;letter-spacing:0.37px">vol-0d6a2700ccf5da6f6</div>
<div class="a lbl" style="left:652px;top:772px">KMS key ID</div>
<div class="a val" style="left:652px;top:794px;">-</div>
<div class="a lbl" style="left:652px;top:832px">Description</div>
<div class="a val" style="left:652px;top:854px;">-</div>
<div class="a lbl" style="left:1056px;top:630px">Progress</div>
<svg class="a" style="left:1056px;top:654px" width="16" height="16" viewBox="0 0 16 16"><circle cx="8" cy="8" r="6.8" fill="none" stroke="#1d8102" stroke-width="1.8"/><path d="M4.8 8.2L7.1 10.4L11.2 5.8" fill="none" stroke="#1d8102" stroke-width="1.8" stroke-linecap="round" stroke-linejoin="round"/></svg>
<div class="a val" style="left:1076px;top:652px;color:#1d8102">Available (100%)</div>
<div class="a lbl" style="left:1056px;top:690px">Started</div>
<svg class="a" style="left:1061px;top:715px" width="14" height="14" viewBox="0 0 14 14"><path d="M4 3V1H13V10H11" fill="none" stroke="#414d5c" stroke-width="2"/><rect x="1" y="4" width="9" height="9" fill="none" stroke="#414d5c" stroke-width="2"/></svg>
<div class="a val" style="left:1084px;top:712px;">Tue Jul 18 2023 17:44:03 GMT-0700 (Pacific Daylight</div>
<div class="a val" style="left:1056px;top:734px;">Time)</div>
<div class="a lbl" style="left:1056px;top:772px">KMS key alias</div>
<div class="a val" style="left:1056px;top:794px;">-</div>
<div class="a lbl" style="left:1459px;top:630px">Snapshot status</div>
<svg class="a" style="left:1459px;top:654px" width="16" height="16" viewBox="0 0 16 16"><circle cx="8" cy="8" r="6.8" fill="none" stroke="#1d8102" stroke-width="1.8"/><path d="M4.8 8.2L7.1 10.4L11.2 5.8" fill="none" stroke="#1d8102" stroke-width="1.8" stroke-linecap="round" stroke-linejoin="round"/></svg>
<div class="a val" style="left:1479px;top:652px;color:#1d8102">Completed</div>
<div class="a lbl" style="left:1459px;top:690px">Product codes</div>
<div class="a val" style="left:1459px;top:712px;">-</div>
<div class="a lbl" style="left:1459px;top:772px">KMS key ARN</div>
<div class="a val" style="left:1459px;top:794px;">-</div>
<svg class="a" style="left:1879px;top:87px" width="18" height="18" viewBox="0 0 18 18"><circle cx="9" cy="9" r="7.3" fill="none" stroke="#545b64" stroke-width="1.8"/><circle cx="9" cy="5.6" r="1.1" fill="#545b64"/><path d="M7.2 8H9.2V12.6M7.2 12.6H11" fill="none" stroke="#545b64" stroke-width="1.7"/></svg>
<div class="a" style="left:1576px;top:116px;width:253px;height:311px;background:#fff;border:1px solid #e3e6e8;border-top:none;box-shadow:0 1px 2px rgba(0,28,36,.25)"></div>
<div class="a" style="left:1577px;top:178px;width:251px;height:32px;background:#f2f3f3;border:1px solid #879596"></div>
<div class="a mi " style="top:122px">Create volume from snapshot</div>
<div class="a mi " style="top:153px">Create image from snapshot</div>
<div class="a mi " style="top:184px">Copy snapshot</div>
<div class="a mi " style="top:215px">Modify permissions</div>
<div class="a mi " style="top:246px">Manage fast snapshot restore</div>
<div class="a mi " style="top:277px">Archive snapshot</div>
<div class="a mi dis" style="top:308px">Restore snapshot from archive</div>
<div class="a mi dis" style="top:339px">Change restore period</div>
<div class="a mi " style="top:370px">Delete snapshot</div>
<div class="a mi " style="top:401px">Manage tags</div>
<div class="a" style="left:1582px;top:176px;width:139px;height:33px;border:2px solid #e0161e"></div>
</body></html>
